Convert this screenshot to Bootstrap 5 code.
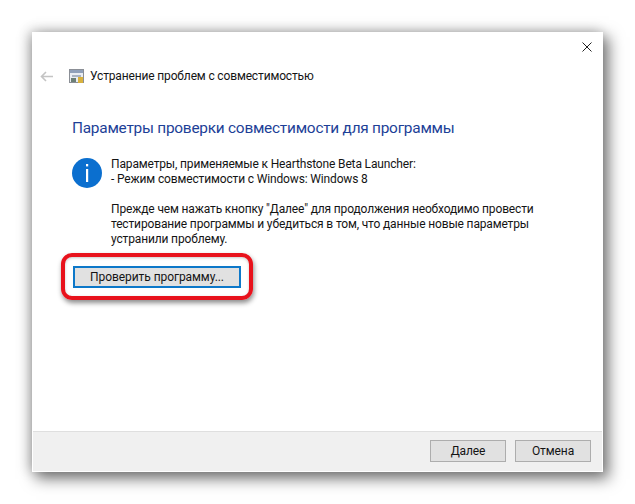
<!DOCTYPE html>
<html lang="ru">
<head>
<meta charset="utf-8">
<title>Устранение проблем с совместимостью</title>
<link href="https://cdn.jsdelivr.net/npm/bootstrap@5.3.0/dist/css/bootstrap.min.css" rel="stylesheet">
<style>
html,body{height:504px;overflow:hidden;background:#fff}
body{font-family:Roboto,"Open Sans",sans-serif;font-size:12px;letter-spacing:-.15px;line-height:15px;color:#141414;padding:32px}
.wnd{width:571px;height:440px;background:#fff;box-shadow:-3px -1px 12px rgba(0,0,0,.24),5px 6px 14px 1px rgba(0,0,0,.5)}
.wnd-close{height:32px;padding:10px 11px 0 0}
.wnd-head{height:24px;padding-left:8px}
.wnd-arrow{width:29px}
.wnd-ico{margin-right:5px}
.wnd-body{padding:29px 0 0 40px}
.wnd-title{font-size:15.4px;letter-spacing:-.24px;line-height:22px;color:#1d3f97;font-weight:400;margin:0 0 18px}
.info-gap{gap:9px}
.info-ico{width:30px;height:30px;margin-top:1px;flex:none}
.info-txt{margin:0 0 15px}
.try-wrap{position:relative;margin:19px 0 0 1px;width:168px}
.try-btn{width:168px;height:22px;padding:0;border:2px solid #0d78c9;border-radius:0;background:#e1e1e1;color:#141414;font-size:12px;letter-spacing:-.07px;line-height:16px}
.red-ring{position:absolute;left:-12px;top:-13px;width:192px;height:47px;border:4px solid #e8121c;border-radius:11px;box-shadow:1px 3px 5px rgba(0,0,0,.45),inset 0 1px 3px rgba(0,0,0,.22);pointer-events:none}
.wnd-foot{height:40px;margin:0 1px 1px;background:#f0f0f0;border-top:1px solid #dfdfdf;padding:8px 11px 0 0;gap:9px}
.foot-btn{width:76px;height:22px;padding:0;border:1px solid #adadad;border-radius:0;background:#e1e1e1;color:#141414;font-size:12px;letter-spacing:-.1px;line-height:18px}
</style>
</head>
<body>
<div class="wnd d-flex flex-column">
  <div class="wnd-close d-flex justify-content-end">
    <svg width="10" height="10" viewBox="0 0 10 10"><path d="M.5.5l9 9M9.500.5l-9 9" stroke="#222" stroke-width="1" fill="none"/></svg>
  </div>
  <div class="wnd-head d-flex align-items-center">
    <div class="wnd-arrow d-flex">
      <svg width="13" height="11" viewBox="0 0 13 11"><path d="M6 1L1.500 5.500 6 10M2 5.500h11" stroke="#c4c4c4" stroke-width="1.600" fill="none"/></svg>
    </div>
    <svg class="wnd-ico" width="16" height="15" viewBox="0 0 16 15">
      <rect x=".5" y=".5" width="14" height="13" fill="#e9edf3" stroke="#8b8f96"/>
      <rect x="1" y="1" width="13" height="3" fill="#8fa0ba"/>
      <rect x="3" y="6" width="9" height="2" fill="#a9b4c4"/>
      <rect x="2" y="9" width="5" height="4" fill="#6d7f76"/>
      <rect x="9" y="8" width="5" height="6" fill="#d9b23f"/>
    </svg>
    <span>Устранение проблем с совместимостью</span>
  </div>
  <div class="wnd-body flex-grow-1">
    <h1 class="wnd-title">Параметры проверки совместимости для программы</h1>
    <div class="d-flex info-gap">
      <svg class="info-ico" viewBox="0 0 30 30">
        <circle cx="15" cy="15" r="15" fill="#0b6fcf"/>
        <rect x="14" y="6" width="2.200" height="2.400" fill="#fff"/>
        <rect x="14" y="11" width="2.200" height="13" fill="#fff"/>
      </svg>
      <div>
        <p class="info-txt">Параметры, применяемые к Hearthstone Beta Launcher:<br>- Режим совместимости с Windows: Windows 8</p>
        <p class="m-0">Прежде чем нажать кнопку "Далее" для продолжения необходимо провести<br>тестирование программы и убедиться в том, что данные новые параметры<br>устранили проблему.</p>
      </div>
    </div>
    <div class="try-wrap">
      <button type="button" class="btn try-btn">Проверить программу...</button>
      <div class="red-ring"></div>
    </div>
  </div>
  <div class="wnd-foot d-flex justify-content-end">
    <button type="button" class="btn foot-btn"><u>Д</u>алее</button>
    <button type="button" class="btn foot-btn">Отмена</button>
  </div>
</div>
<script src="https://cdn.jsdelivr.net/npm/bootstrap@5.3.0/dist/js/bootstrap.bundle.min.js"></script>
</body>
</html>
